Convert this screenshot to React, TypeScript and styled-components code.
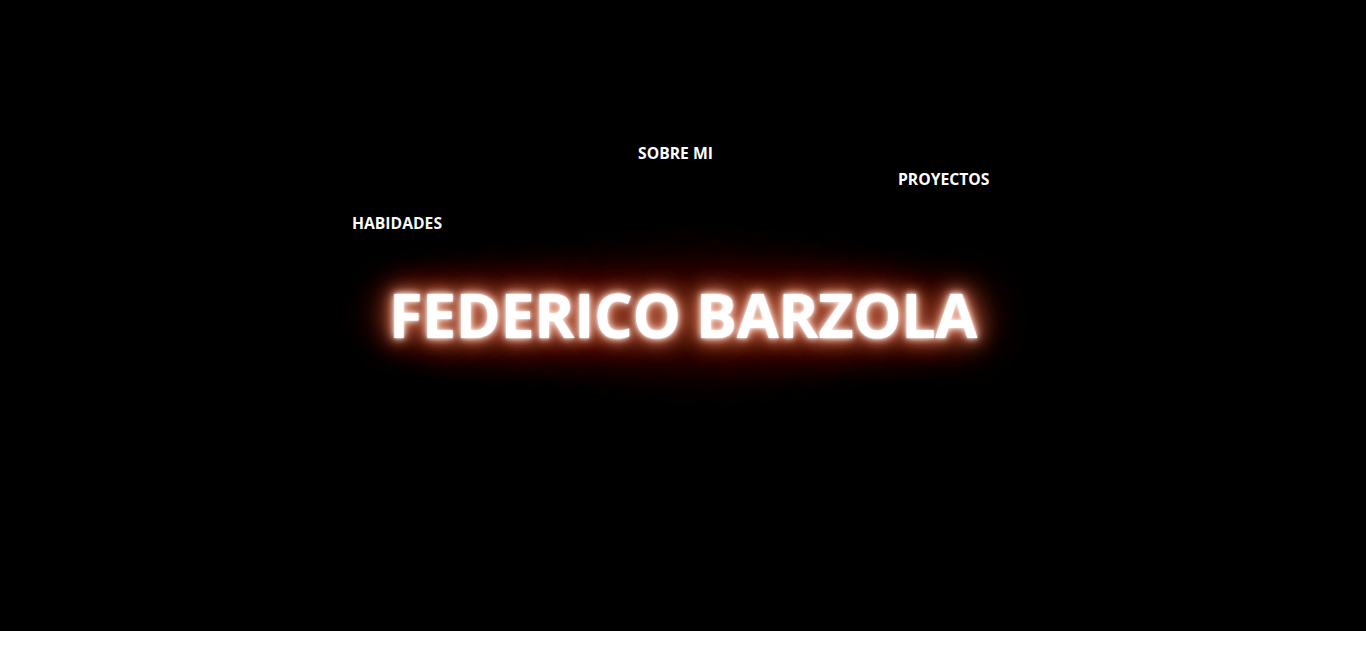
import React from "react";
import styled, { createGlobalStyle } from "styled-components";

const Global = createGlobalStyle`
  html, body { margin: 0; padding: 0; background: #ffffff; }
  body { font-family: "Open Sans", "Noto Sans", Arial, sans-serif; }
`;

const Hero = styled.section`
  position: relative;
  isolation: isolate;
  height: 631px;
  background: #000000;
  display: flex;
  align-items: center;
  justify-content: center;
  overflow: hidden;
`;

const Title = styled.h1`
  position: relative;
  margin: 0;
  margin-top: -2px;
  font-family: "Open Sans", "Noto Sans", sans-serif;
  font-weight: 700;
  font-size: 61px;
  letter-spacing: -0.4px;
  color: #ffffff;
  text-shadow:
    0 0 2px #ffffff,
    0 0 6px #fff3ee,
    0 0 12px #f0b49c,
    0 0 18px #c8664a,
    0 0 24px #a8482e,
    0 0 32px #a0442a,
    0 0 42px #8a3a22,
    0 0 55px #7a2e18,
    0 0 75px #5e2210,
    0 0 100px #421708;

  &::before {
    content: "";
    position: absolute;
    left: -60px;
    right: -60px;
    top: -60px;
    bottom: -60px;
    border-radius: 50%;
    background: radial-gradient(ellipse at center, rgba(80, 28, 12, 0.5) 0%, rgba(45, 14, 5, 0.28) 50%, rgba(0, 0, 0, 0) 72%);
    z-index: -1;
  }
`;

const NavLink = styled.a<{ $x: number; $y: number }>`
  position: absolute;
  left: ${(p) => p.$x}px;
  top: ${(p) => p.$y}px;
  font-family: "Open Sans", "Noto Sans", sans-serif;
  font-weight: 700;
  font-size: 15.7px;
  color: #ffffff;
  text-decoration: none;
  line-height: 1;
`;

export default function App() {
  return (
    <>
      <Global />
      <Hero>
        <NavLink href="#" $x={638} $y={146}>SOBRE MI</NavLink>
        <NavLink href="#" $x={898} $y={172}>PROYECTOS</NavLink>
        <NavLink href="#" $x={352} $y={216}>HABIDADES</NavLink>
        <Title>FEDERICO BARZOLA</Title>
      </Hero>
    </>
  );
}
